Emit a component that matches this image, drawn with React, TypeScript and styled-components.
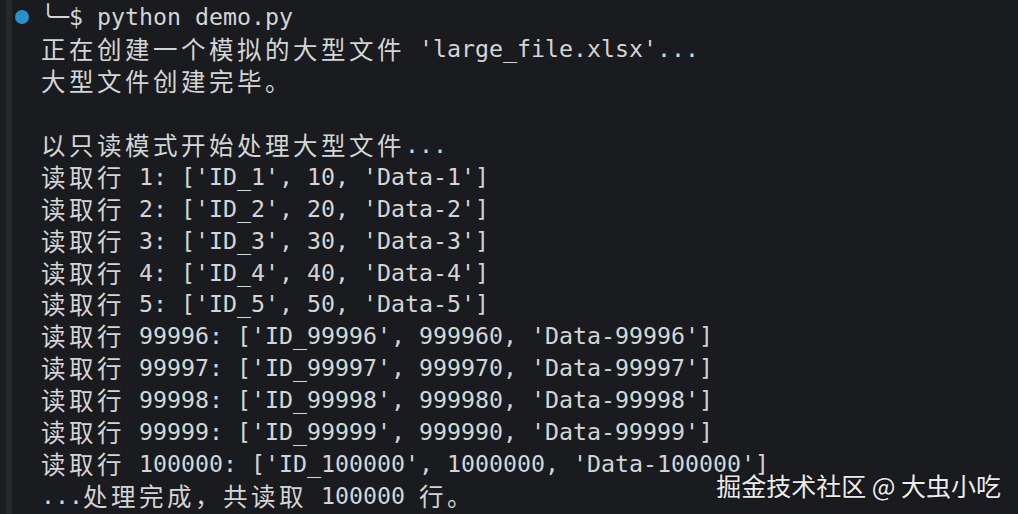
import React from "react";
import styled, { createGlobalStyle } from "styled-components";

const Global = createGlobalStyle`
  html, body { margin: 0; padding: 0; background: #191b1f; }
  body { width: 1018px; height: 514px; overflow: hidden; }
`;

const Screen = styled.div`
  position: relative;
  display: flex;
  width: 1018px;
  height: 514px;
  background: #191b1f;
  overflow: hidden;
`;

const Gutter = styled.div`
  display: flex;
  width: 41px;
  flex-shrink: 0;
`;

const EdgeDark = styled.div`
  width: 6px;
  background: #1c1e22;
`;

const EdgeBar = styled.div`
  width: 6px;
  background: #25282c;
`;

const DotCell = styled.div`
  flex: 1;
  display: flex;
  justify-content: flex-start;
  padding: 10px 0 0 3px;
`;

const Dot = styled.div`
  width: 14px;
  height: 14px;
  border-radius: 50%;
  background: #2b8fcb;
`;

const Output = styled.pre`
  margin: 0;
  padding-top: 1px;
  font-family: "DejaVu Sans Mono", "Noto Sans CJK SC", monospace;
  font-size: 23.25px;
  line-height: 31.95px;
  color: #d4d5d6;
  white-space: pre;
`;

const Line = styled.div`
  height: 31.95px;
`;

const Wide = styled.span`
  display: inline-block;
  width: 28px;
  text-align: left;
  font-family: "Noto Sans CJK SC", sans-serif;
  font-size: 24.5px;
  line-height: 31.95px;
  vertical-align: top;
`;

const Watermark = styled.div`
  position: absolute;
  right: 17px;
  bottom: 14px;
  font-family: "Noto Sans CJK SC", "Noto Sans", sans-serif;
  font-size: 25px;
  line-height: 30px;
  color: #ececec;
  text-shadow: 0 0 2px rgba(0, 0, 0, 0.6);
  white-space: pre;
`;

const isWide = (c: string) => c.charCodeAt(0) >= 0x2e80;

function TermLine({ text }: { text: string }) {
  const parts: React.ReactNode[] = [];
  let buf = "";
  let k = 0;
  for (const ch of text) {
    if (isWide(ch)) {
      if (buf) {
        parts.push(buf);
        buf = "";
      }
      parts.push(<Wide key={k++}>{ch}</Wide>);
    } else {
      buf += ch;
    }
  }
  if (buf) parts.push(buf);
  return <Line>{parts.length ? parts : " "}</Line>;
}

const lines = [
  "╰─$ python demo.py",
  "正在创建一个模拟的大型文件 'large_file.xlsx'...",
  "大型文件创建完毕。",
  "",
  "以只读模式开始处理大型文件...",
  "读取行 1: ['ID_1', 10, 'Data-1']",
  "读取行 2: ['ID_2', 20, 'Data-2']",
  "读取行 3: ['ID_3', 30, 'Data-3']",
  "读取行 4: ['ID_4', 40, 'Data-4']",
  "读取行 5: ['ID_5', 50, 'Data-5']",
  "读取行 99996: ['ID_99996', 999960, 'Data-99996']",
  "读取行 99997: ['ID_99997', 999970, 'Data-99997']",
  "读取行 99998: ['ID_99998', 999980, 'Data-99998']",
  "读取行 99999: ['ID_99999', 999990, 'Data-99999']",
  "读取行 100000: ['ID_100000', 1000000, 'Data-100000']",
  "...处理完成，共读取 100000 行。",
];

export default function App() {
  return (
    <>
      <Global />
      <Screen>
        <Gutter>
          <EdgeDark />
          <EdgeBar />
          <DotCell>
            <Dot />
          </DotCell>
        </Gutter>
        <Output>
          {lines.map((l, i) => (
            <TermLine key={i} text={l} />
          ))}
        </Output>
        <Watermark>掘金技术社区 @ 大虫小吃</Watermark>
      </Screen>
    </>
  );
}
